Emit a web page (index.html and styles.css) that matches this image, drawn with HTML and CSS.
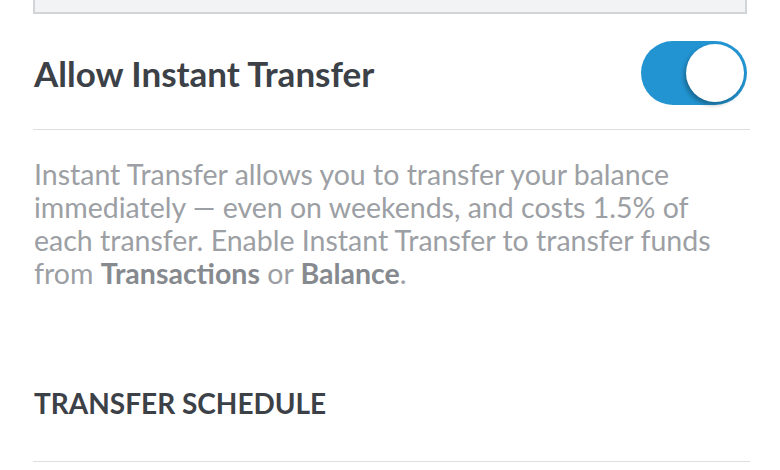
FILE: index.html
```html
<!DOCTYPE html>
<html>
<head>
<meta charset="utf-8">
<link rel="stylesheet" href="styles.css">
</head>
<body>
<div class="page">
  <div class="top-box"></div>
  <div class="setting-row">
    <span class="setting-label">Allow Instant Transfer</span>
    <div class="toggle on"><div class="knob"></div></div>
  </div>
  <p class="description">Instant Transfer allows you to transfer your balance immediately — even on weekends, and costs 1.5% of each transfer. Enable Instant Transfer to transfer funds from <b>Transactions</b> or <b>Balance</b>.</p>
  <div class="section-header">TRANSFER SCHEDULE</div>
</div>
</body>
</html>
```

FILE: styles.css
```css
html, body {
  margin: 0;
  padding: 0;
  background: #ffffff;
}
.page {
  width: 780px;
  height: 470px;
  overflow: hidden;
  padding: 0 30px 0 33px;
  box-sizing: border-box;
  font-family: "Lato", "Liberation Sans", sans-serif;
}
.top-box {
  height: 12px;
  margin-right: 3px;
  background: #f2f3f5;
  border: 2px solid #d2d5d8;
  border-top: none;
}
.setting-row {
  height: 115px;
  display: flex;
  align-items: center;
  justify-content: space-between;
  border-bottom: 1px solid #dcdee0;
}
.setting-label {
  font-size: 35px;
  font-weight: 700;
  color: #3c4147;
  padding-left: 1px;
  padding-top: 2px;
}
.toggle {
  width: 106px;
  height: 64px;
  border-radius: 32px;
  background: #2294d1;
  position: relative;
  margin-right: 3px;
  margin-top: 3px;
}
.knob {
  position: absolute;
  right: 3px;
  top: 3px;
  width: 58px;
  height: 58px;
  border-radius: 50%;
  background: #ffffff;
  box-shadow: -2px 3px 4px rgba(0,0,0,0.3);
}
.description {
  margin: 0;
  padding: 28px 0 0 1px;
  font-size: 28.5px;
  line-height: 33px;
  color: #9ca0a4;
  width: 700px;
}
.description b {
  font-weight: 700;
  color: #868a8f;
}
.section-header {
  margin-top: 96px;
  height: 75px;
  padding-left: 1px;
  font-size: 28px;
  font-weight: 700;
  color: #3c4147;
  border-bottom: 1px solid #dcdee0;
}
```
